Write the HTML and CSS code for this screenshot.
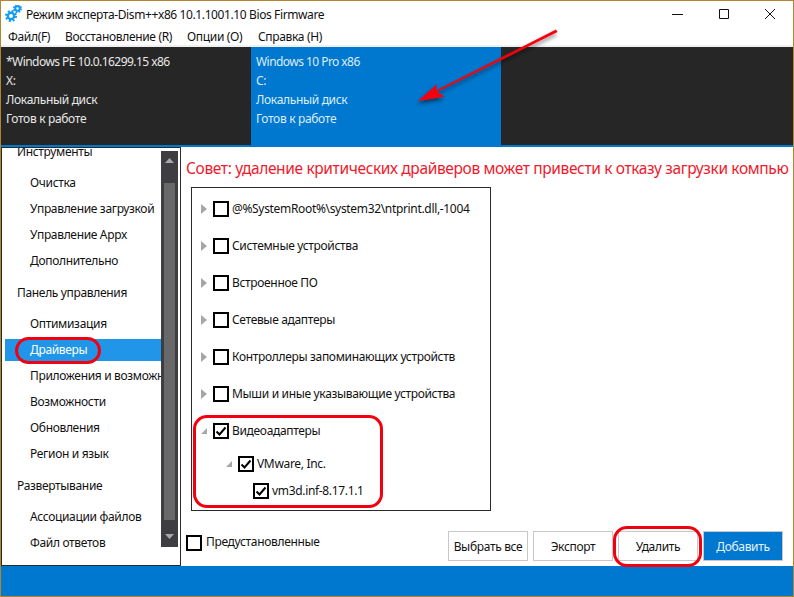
FILE: index.html
```html
<!DOCTYPE html>
<html lang="ru">
<head>
<meta charset="utf-8">
<title>Dism++</title>
<link rel="stylesheet" href="styles.css">
</head>
<body>
<div class="window">
  <header class="titlebar">
    <svg class="app-icon" width="20" height="20" viewBox="0 0 20 20">
      <g fill="none" stroke="#129bf0">
        <circle cx="6" cy="11" r="3.200" stroke-width="2.400"/>
        <circle cx="6" cy="11" r="5" stroke-width="2" stroke-dasharray="2 1.930"/>
        <circle cx="12.500" cy="3.500" r="2.200" stroke-width="2"/>
        <circle cx="12.500" cy="3.500" r="3.600" stroke-width="1.800" stroke-dasharray="1.700 1.130"/>
      </g>
    </svg>
    <span class="title-text">Режим эксперта-Dism++x86 10.1.1001.10 Bios Firmware</span>
    <div class="win-controls">
      <svg width="12" height="12" viewBox="0 0 12 12"><path d="M0 6.500h11" stroke="#111" fill="none"/></svg>
      <svg width="12" height="12" viewBox="0 0 12 12"><path d="M1.500 1.500h9v9h-9z" stroke="#111" fill="none"/></svg>
      <svg width="12" height="12" viewBox="0 0 12 12"><path d="M1 1l10 10M11 1L1 11" stroke="#111" fill="none"/></svg>
    </div>
  </header>
  <nav class="menubar">
    <span class="menu-file">Файл(F)</span>
    <span class="menu-restore">Восстановление (R)</span>
    <span class="menu-options">Опции (O)</span>
    <span>Справка (H)</span>
  </nav>
  <section class="sessions">
    <div class="session">
      <p class="session-name">*Windows PE 10.0.16299.15 x86</p><p>X:</p><p>Локальный диск</p><p>Готов к работе</p>
    </div>
    <div class="session session-active">
      <p class="session-name">Windows 10 Pro x86</p><p>C:</p><p>Локальный диск</p><p>Готов к работе</p>
    </div>
  </section>
  <main class="main">
    <aside class="sidebar">
      <ul class="side-list">
        <li class="side-head side-first">Инструменты</li>
        <li>Очистка</li>
        <li>Управление загрузкой</li>
        <li>Управление Appx</li>
        <li>Дополнительно</li>
        <li class="side-head">Панель управления</li>
        <li>Оптимизация</li>
        <li class="side-selected">Драйверы</li>
        <li>Приложения и возможности</li>
        <li>Возможности</li>
        <li>Обновления</li>
        <li>Регион и язык</li>
        <li class="side-head">Развертывание</li>
        <li>Ассоциации файлов</li>
        <li>Файл ответов</li>
      </ul>
      <div class="scrollbar">
        <svg class="scroll-arrow" width="17" height="14" viewBox="0 0 17 14"><path d="M4 12l4.500-5 4.500 5z" fill="#a8a8a8"/></svg>
        <div class="scroll-thumb"></div>
        <svg class="scroll-arrow" width="17" height="16" viewBox="0 0 17 16"><path d="M4 3l4.500 5 4.500-5z" fill="#a8a8a8"/></svg>
      </div>
    </aside>
    <section class="content">
      <p class="tip">Совет: удаление критических драйверов может привести к отказу загрузки компью</p>
      <div class="tree">
        <div class="row"><svg class="tri" width="9" height="10" viewBox="0 0 9 10"><path d="M1 0l6 5-6 5z"/></svg><span class="check"></span><span>@%SystemRoot%\system32\ntprint.dll,-1004</span></div>
        <div class="row"><svg class="tri" width="9" height="10" viewBox="0 0 9 10"><path d="M1 0l6 5-6 5z"/></svg><span class="check"></span><span>Системные устройства</span></div>
        <div class="row"><svg class="tri" width="9" height="10" viewBox="0 0 9 10"><path d="M1 0l6 5-6 5z"/></svg><span class="check"></span><span>Встроенное ПО</span></div>
        <div class="row"><svg class="tri" width="9" height="10" viewBox="0 0 9 10"><path d="M1 0l6 5-6 5z"/></svg><span class="check"></span><span>Сетевые адаптеры</span></div>
        <div class="row"><svg class="tri" width="9" height="10" viewBox="0 0 9 10"><path d="M1 0l6 5-6 5z"/></svg><span class="check"></span><span>Контроллеры запоминающих устройств</span></div>
        <div class="row"><svg class="tri" width="9" height="10" viewBox="0 0 9 10"><path d="M1 0l6 5-6 5z"/></svg><span class="check"></span><span>Мыши и иные указывающие устройства</span></div>
        <div class="row"><svg class="tri" width="9" height="10" viewBox="0 0 9 10"><path d="M7 2v6H1z"/></svg><span class="check"><svg width="14" height="14" viewBox="0 0 14 14"><path d="M2.500 7.500l3 3 6-7" fill="none" stroke="#000" stroke-width="2"/></svg></span><span>Видеоадаптеры</span></div>
        <div class="row row-vendor"><svg class="tri" width="9" height="10" viewBox="0 0 9 10"><path d="M7 2v6H1z"/></svg><span class="check"><svg width="14" height="14" viewBox="0 0 14 14"><path d="M2.500 7.500l3 3 6-7" fill="none" stroke="#000" stroke-width="2"/></svg></span><span>VMware, Inc.</span></div>
        <div class="row row-driver"><span class="check"><svg width="14" height="14" viewBox="0 0 14 14"><path d="M2.500 7.500l3 3 6-7" fill="none" stroke="#000" stroke-width="2"/></svg></span><span>vm3d.inf-8.17.1.1</span></div>
      </div>
      <div class="actions">
        <label class="preset"><span class="check"></span><span class="preset-label">Предустановленные</span></label>
        <div class="buttons">
          <button class="btn">Выбрать все</button>
          <button class="btn">Экспорт</button>
          <button class="btn">Удалить</button>
          <button class="btn btn-primary">Добавить</button>
        </div>
      </div>
    </section>
  </main>
  <footer class="statusbar"></footer>
</div>
<div class="mark mark-driver"></div>
<div class="mark mark-tree"></div>
<div class="mark mark-delete"></div>
<svg class="arrow" width="794" height="597" viewBox="0 0 794 597">
  <defs><filter id="sh" x="-20%" y="-20%" width="140%" height="140%"><feDropShadow dx="-1" dy="3" stdDeviation="2" flood-color="#000" flood-opacity=".55"/></filter></defs>
  <path filter="url(#sh)" d="M556 29.500l1.500 2.500L437 92l8 4.500-27 4.500 19-17-1 6.500z" fill="#f5000f"/>
</svg>
</body>
</html>
```
FILE: styles.css
```css
* { box-sizing: border-box; }
html, body { margin: 0; padding: 0; }
body {
  width: 794px;
  height: 597px;
  overflow: hidden;
  background: #fff;
  font-family: "Noto Sans", "Open Sans", sans-serif;
  font-size: 12px;
  letter-spacing: -0.33px;
  color: #111;
}
p { margin: 0; }
.window {
  width: 794px;
  height: 597px;
  border: 1px solid #b5842f;
  display: flex;
  flex-direction: column;
  background: #fff;
}
.titlebar {
  height: 28px;
  flex: none;
  display: flex;
  align-items: center;
  padding-left: 4px;
}
.app-icon { margin-right: 1px; flex: none; }
.title-text { letter-spacing: -0.39px; padding-bottom: 2px; }
.win-controls {
  margin-left: auto;
  display: flex;
  gap: 34px;
  padding-right: 17px;
  padding-bottom: 3px;
}
.menubar {
  height: 16px;
  flex: none;
  display: flex;
  align-items: center;
  padding-left: 7px;
  padding-bottom: 2px;
}
.menu-file { width: 57px; }
.menu-restore { width: 122px; }
.menu-options { width: 71px; }
.sessions {
  height: 102px;
  flex: none;
  border-top: 2px solid #f0f0f0;
  background: #262626;
  display: flex;
  border-bottom: 2px solid #0078cf;
  color: #e8e8e8;
}
.session {
  width: 250px;
  padding: 5px 5px;
  line-height: 19.100px;
}
.session-name { letter-spacing: -0.55px; }
.session-active { background: #0078cf; color: #dcecf8; }
.main {
  flex: 1;
  display: flex;
  min-height: 0;
}
.sidebar {
  width: 180px;
  flex: none;
  border: 1px solid #2a2a2a;
  display: flex;
  overflow: hidden;
}
.side-list {
  list-style: none;
  margin: -9px 0 0 3px;
  padding: 0;
  width: 156px;
  flex: none;
  overflow: hidden;
}
.side-list li {
  height: 26px;
  line-height: 26px;
  padding-left: 25px;
  white-space: nowrap;
  overflow: hidden;
}
.side-list .side-head {
  padding-left: 12px;
  margin-top: 6px;
  margin-bottom: 5px;
}
.side-list .side-first { margin-top: 0; }
.side-list .side-selected {
  background: #2196e8;
  color: #fff;
  height: 22px;
  margin-top: 2px;
  margin-bottom: 2px;
  line-height: 22px;
}
.scrollbar {
  width: 17px;
  height: 396px;
  margin-top: 3px;
  background: #3e3e42;
  display: flex;
  flex-direction: column;
  flex: none;
}
.scroll-arrow { flex: none; }
.scroll-thumb {
  flex: 1;
  width: 11px;
  margin: 18px 0 11px 3px;
  background: #686868;
}
.content {
  flex: 1;
  min-width: 0;
  overflow: hidden;
  padding-left: 5px;
}
.tip {
  color: #f0192d;
  font-size: 15.500px;
  letter-spacing: -0.36px;
  line-height: 20px;
  margin-top: 11px;
  white-space: nowrap;
}
.tree {
  width: 300px;
  height: 324px;
  margin: 9px 0 0 5px;
  border: 1px solid #2a2a2a;
  padding-top: 2px;
}
.row {
  height: 37px;
  display: flex;
  align-items: center;
  padding-left: 8px;
  white-space: nowrap;
  color: #111;
}
.row-vendor { height: 29px; padding-left: 33px; }
.row-driver { height: 25px; padding-left: 61px; }
.tri { fill: #a6a6a6; margin-right: 4px; flex: none; }
.check {
  width: 16px;
  height: 16px;
  border: 2px solid #000;
  background: #fff;
  flex: none;
  margin-right: 3px;
  display: inline-flex;
  align-items: center;
  justify-content: center;
}
.check svg { flex: none; margin: -1px; }
.actions {
  display: flex;
  align-items: flex-start;
  margin-top: 20px;
  padding-right: 10px;
}
.preset {
  display: flex;
  align-items: center;
  gap: 1px;
  margin-top: 2px;
}
.preset-label { padding-bottom: 2px; }
.buttons {
  display: flex;
  margin-left: auto;
  gap: 5px;
}
.btn {
  width: 80px;
  height: 30px;
  margin: 0;
  padding: 0;
  border: 1px solid #c8c8c8;
  background: #fff;
  font: inherit;
  letter-spacing: inherit;
  color: #111;
}
.btn-primary { background: #0078cf; color: #e8f2fa; }
.statusbar {
  height: 30px;
  flex: none;
  background: #0078cf;
}
.mark {
  position: absolute;
  border: 3px solid #f2000f;
}
.mark-driver { left: 15px; top: 337px; width: 86px; height: 27px; border-radius: 14px; }
.mark-tree { left: 193px; top: 415px; width: 190px; height: 93px; border-radius: 14px; }
.mark-delete { left: 613px; top: 526px; width: 89px; height: 41px; border-radius: 14px; }
.arrow { position: absolute; left: 0; top: 0; pointer-events: none; }
```
